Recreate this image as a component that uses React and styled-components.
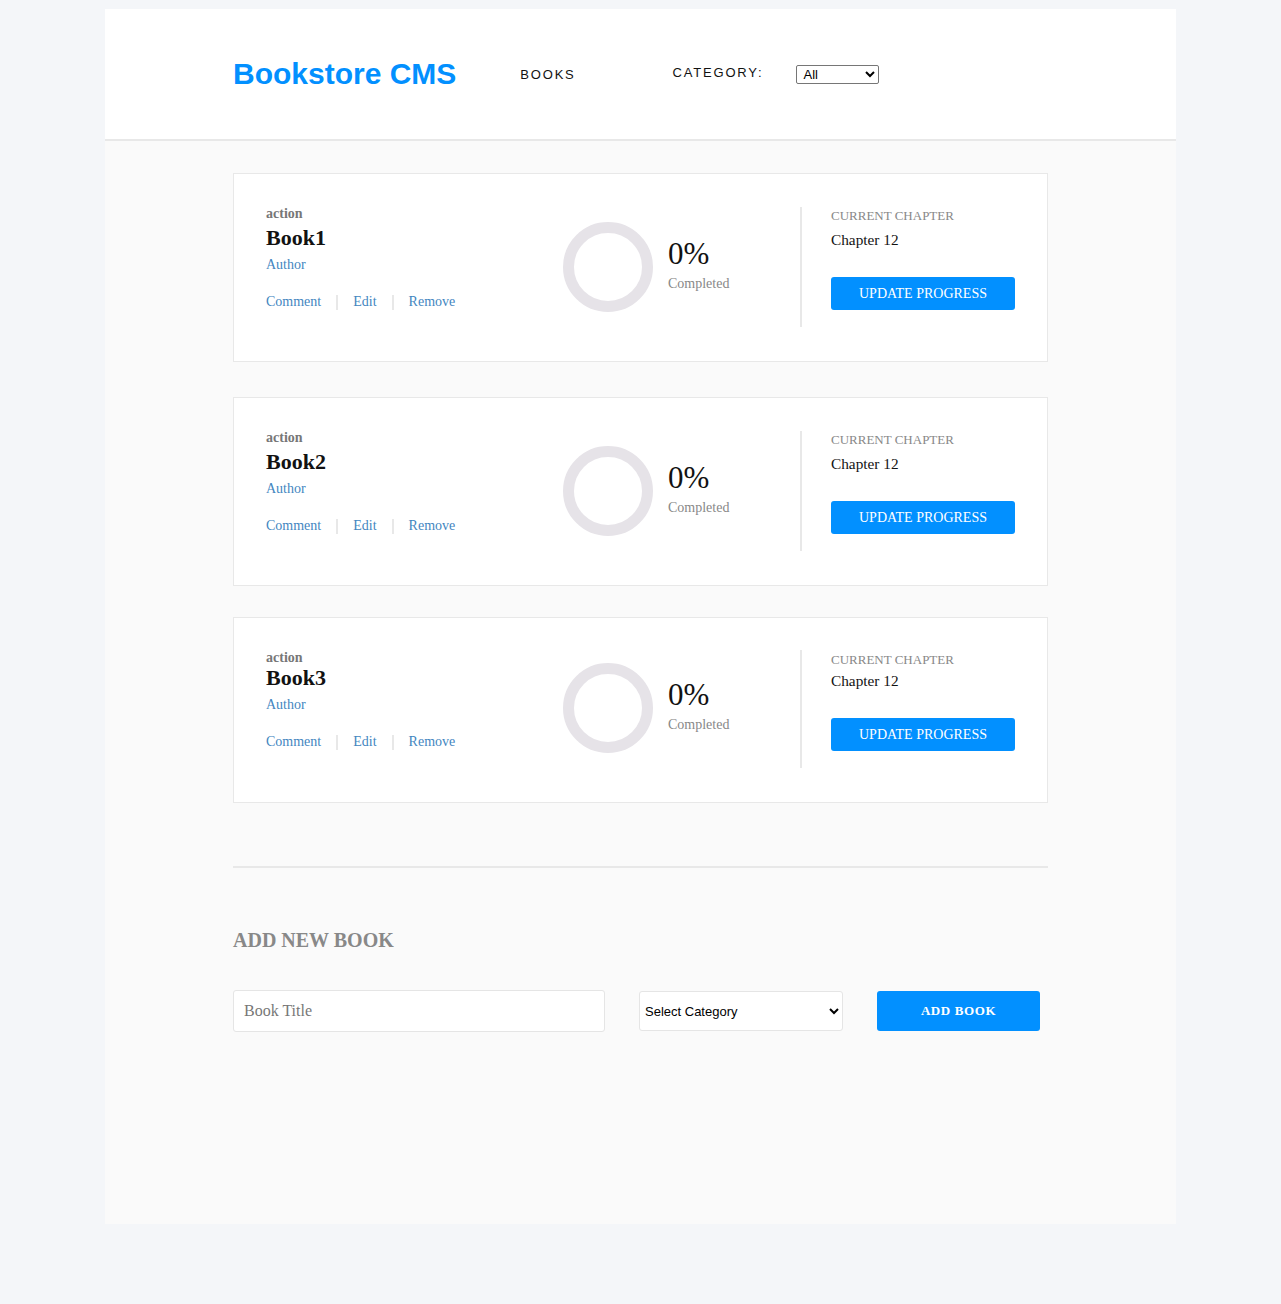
import React from 'react';
import styled, { createGlobalStyle } from 'styled-components';

const GlobalStyle = createGlobalStyle`
    html, body {
        margin: 0;
        padding: 0;
        background: #f4f6f9;
    }
    * {
        box-sizing: border-box;
    }
`;

const Page = styled.div`
    min-height: 100vh;
    padding-top: 9px;
`;

const Panel = styled.div`
    width: 1071px;
    min-height: 1215px;
    margin: 0 auto;
    background: #fafafa;
`;

const Header = styled.header`
    height: 132px;
    background: #fff;
    border-bottom: 2px solid #e8e8e8;
    display: flex;
    align-items: center;
    padding-left: 128px;
    font-family: "Liberation Sans", Arial, sans-serif;
`;

const Logo = styled.h1`
    margin: 0 64px 0 0;
    font-size: 30px;
    font-weight: 700;
    color: #0290ff;
`;

const NavLabel = styled.span`
    font-size: 13px;
    letter-spacing: 1.8px;
    color: #121212;
    margin-right: ${(p) => p.$gap || 0}px;
    position: relative;
    top: ${(p) => p.$shift || 0}px;
`;

const FilterSelect = styled.select`
    width: 83px;
    height: 19px;
    font-family: "Liberation Sans", Arial, sans-serif;
    font-size: 13px;
    border: 1px solid #767676;
    border-radius: 2px;
    background: #fff;
    color: #000;
    padding: 0 2px;
`;

const Main = styled.main`
    width: 815px;
    margin: 0 auto 0 128px;
    padding-top: 32px;
    font-family: "Liberation Serif", "Times New Roman", serif;
`;

const Card = styled.article`
    background: #fff;
    border: 1px solid #e8e8e8;
    display: flex;
    align-items: center;
    padding: 30px 31px 31px 32px;
    margin-top: ${(p) => p.$offset}px;
`;

const Info = styled.div`
    width: 297px;
    align-self: flex-start;
    display: flex;
    flex-direction: column;
`;

const Genre = styled.span`
    font-size: 14px;
    font-weight: 700;
    color: #777;
    line-height: 20px;
`;

const Title = styled.h2`
    margin: ${(p) => (p.$tight ? -3 : 1)}px 0 0;
    font-size: 22px;
    font-weight: 700;
    line-height: 26px;
    color: #121212;
`;

const Author = styled.span`
    margin-top: 4.4px;
    font-size: 14px;
    line-height: 20px;
    color: #4386bf;
`;

const Actions = styled.div`
    margin-top: 17px;
    display: flex;
    align-items: center;
    font-size: 14px;
    line-height: 20px;
`;

const ActionLink = styled.span`
    color: #4386bf;
`;

const Sep = styled.span`
    width: 2px;
    height: 15px;
    margin: 0 15px;
    background: #e8e8e8;
`;

const Progress = styled.div`
    width: 237px;
    display: flex;
    align-items: center;
    margin-top: ${(p) => (p.$tight ? -4 : 0)}px;
`;

const Ring = styled.svg`
    width: 90px;
    height: 90px;
    flex-shrink: 0;
    margin-right: 15px;
`;

const Stats = styled.div`
    display: flex;
    flex-direction: column;
    margin-bottom: 6px;
`;

const Percent = styled.span`
    font-size: 31px;
    color: #121212;
`;

const Done = styled.span`
    margin-top: 4px;
    font-size: 14px;
    color: #888;
`;

const Chapter = styled.div`
    flex: 1;
    height: ${(p) => (p.$tight ? 118 : 120)}px;
    margin: ${(p) => (p.$tight ? 2 : 3)}px 0 3px;
    border-left: 2px solid #e8e8e8;
    padding: ${(p) => (p.$tight ? 2 : 1)}px 0 0 29px;
    display: flex;
    flex-direction: column;
`;

const ChapterLabel = styled.span`
    font-size: 13px;
    color: #888;
    text-transform: uppercase;
`;

const ChapterName = styled.span`
    margin-top: ${(p) => (p.$tight ? 4 : 7)}px;
    font-size: 15.3px;
    color: #121212;
`;

const BlueButton = styled.button`
    border: none;
    border-radius: 3px;
    background: #0290ff;
    color: #fff;
    font-family: "Liberation Serif", "Times New Roman", serif;
    cursor: pointer;
`;

const UpdateButton = styled(BlueButton)`
    margin-top: 28px;
    width: 184px;
    height: 33px;
    font-size: 14px;
    text-transform: uppercase;
    padding: 0;
`;

const Divider = styled.hr`
    margin: 63px 0 0;
    border: none;
    border-top: 2px solid #e8e8e8;
`;

const FormTitle = styled.h3`
    margin: 61px 0 0;
    font-size: 20px;
    font-weight: 700;
    color: #888;
`;

const Form = styled.form`
    margin-top: 38px;
    display: flex;
    align-items: center;
    gap: 34px;
`;

const TitleInput = styled.input`
    width: 372px;
    height: 42px;
    border: 1px solid #e5e5e5;
    border-radius: 3px;
    background: #fff;
    padding: 0 10px;
    font-family: "Liberation Serif", "Times New Roman", serif;
    font-size: 16px;
    &::placeholder {
        color: #777;
    }
`;

const CategorySelect = styled.select`
    width: 204px;
    height: 40px;
    border: 1px solid #e5e5e5;
    border-radius: 3px;
    background: #fff;
    padding: 0 1px;
    font-family: "Liberation Sans", Arial, sans-serif;
    font-size: 13px;
    color: #000;
`;

const AddButton = styled(BlueButton)`
    width: 163px;
    height: 40px;
    font-size: 13px;
    font-weight: 700;
    letter-spacing: 0.6px;
`;

const books = [
    { id: 1, title: 'Book1', offset: 0 },
    { id: 2, title: 'Book2', offset: 35 },
    { id: 3, title: 'Book3', offset: 31, tight: true },
];

const ProgressRing = () => (
    <Ring viewBox="0 0 90 90">
        <circle cx="45" cy="45" r="39.5" fill="none" stroke="#e6e3e8" strokeWidth="11" />
    </Ring>
);

const BookCard = ({ book }) => (
    <Card $offset={book.offset}>
        <Info>
            <Genre>action</Genre>
            <Title $tight={book.tight}>{book.title}</Title>
            <Author>Author</Author>
            <Actions>
                <ActionLink>Comment</ActionLink>
                <Sep />
                <ActionLink>Edit</ActionLink>
                <Sep />
                <ActionLink>Remove</ActionLink>
            </Actions>
        </Info>
        <Progress $tight={book.tight}>
            <ProgressRing />
            <Stats>
                <Percent>0%</Percent>
                <Done>Completed</Done>
            </Stats>
        </Progress>
        <Chapter $tight={book.tight}>
            <ChapterLabel>Current Chapter</ChapterLabel>
            <ChapterName $tight={book.tight}>Chapter 12</ChapterName>
            <UpdateButton type="button">Update progress</UpdateButton>
        </Chapter>
    </Card>
);

const App = () => (
    <Page>
        <GlobalStyle />
        <Panel>
            <Header>
                <Logo>Bookstore CMS</Logo>
                <NavLabel $gap={97}>BOOKS</NavLabel>
                <NavLabel $gap={33} $shift={-2}>CATEGORY:</NavLabel>
                <FilterSelect defaultValue="All">
                    <option>All</option>
                    <option>Action</option>
                    <option>Biography</option>
                    <option>History</option>
                </FilterSelect>
            </Header>
            <Main>
                {books.map((book) => (
                    <BookCard key={book.id} book={book} />
                ))}
                <Divider />
                <FormTitle>ADD NEW BOOK</FormTitle>
                <Form onSubmit={(e) => e.preventDefault()}>
                    <TitleInput placeholder="Book Title" />
                    <CategorySelect defaultValue="">
                        <option value="">Select Category</option>
                        <option>Action</option>
                        <option>Biography</option>
                    </CategorySelect>
                    <AddButton type="submit">ADD BOOK</AddButton>
                </Form>
            </Main>
        </Panel>
    </Page>
);

export default App;
